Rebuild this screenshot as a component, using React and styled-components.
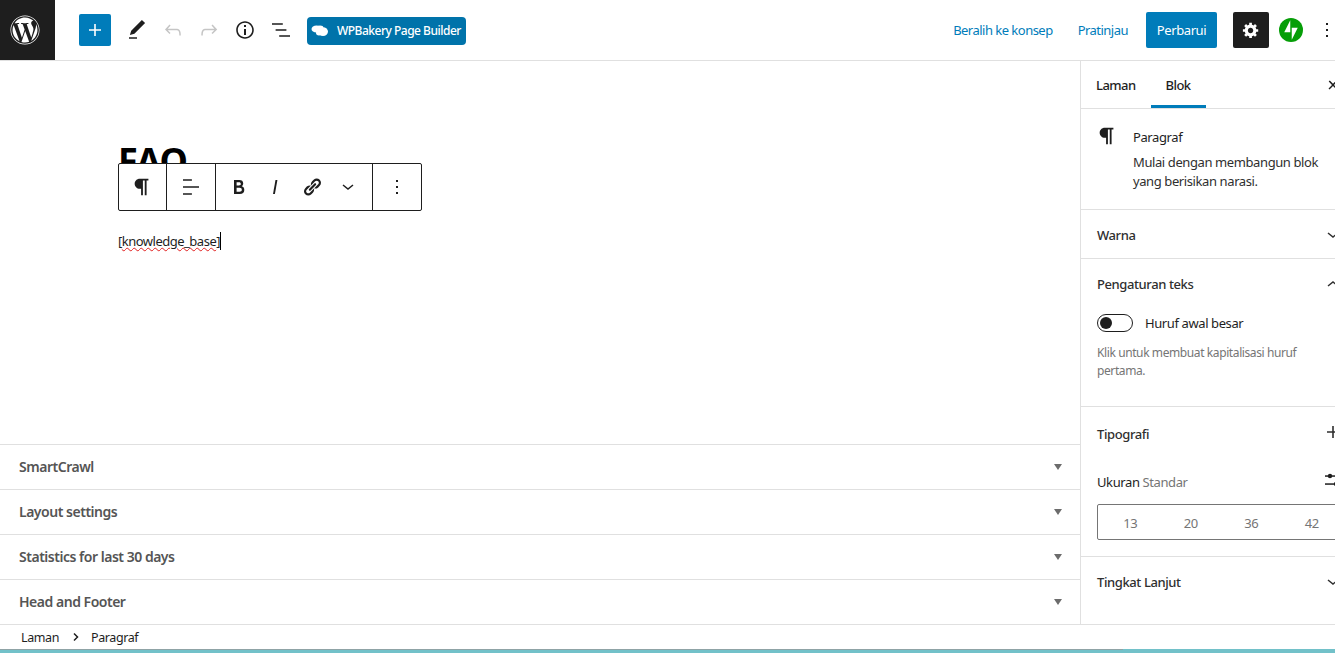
import React from 'react';
import styled, { createGlobalStyle } from 'styled-components';
import { FaWordpress } from 'react-icons/fa';

const GlobalStyle = createGlobalStyle`
  html, body {
    margin: 0;
    height: 100%;
    overflow: hidden;
    background: #fff;
  }
  * {
    box-sizing: border-box;
  }
`;

const Shell = styled.div`
  width: 1361px;
  height: 653px;
  display: flex;
  flex-direction: column;
  font-family: 'Noto Sans', 'Open Sans', sans-serif;
  font-size: 13px;
  letter-spacing: -0.4px;
  color: #1e1e1e;
`;

const Header = styled.header`
  height: 61px;
  flex: none;
  display: flex;
  align-items: center;
  border-bottom: 1px solid #e0e0e0;
  padding-right: 16px;
`;

const LogoBox = styled.div`
  width: 55px;
  height: 60px;
  background: #1e1e1e;
  color: #fff;
  display: flex;
  align-items: center;
  justify-content: center;
  padding-right: 5px;
  margin-right: 24px;
`;

const AddButton = styled.div`
  width: 32px;
  height: 32px;
  background: #007cba;
  border-radius: 2px;
  color: #fff;
  display: flex;
  align-items: center;
  justify-content: center;
  margin-right: 8px;
`;

const ToolIcon = styled.div`
  width: 36px;
  height: 36px;
  margin-left: ${({ $offset }) => $offset || 0}px;
  display: flex;
  align-items: center;
  justify-content: center;
  color: ${({ $muted }) => ($muted ? '#c5c5c5' : '#1e1e1e')};
`;

const BakeryButton = styled.div`
  width: 159px;
  height: 28px;
  margin-left: 8px;
  margin-top: 1px;
  padding-left: 4px;
  background: #0073aa;
  border-radius: 4px;
  color: #fff;
  font-size: 12px;
  font-weight: 500;
  letter-spacing: -0.5px;
  display: flex;
  align-items: center;
  gap: 8px;
  white-space: nowrap;
`;

const HeaderRight = styled.div`
  margin-left: auto;
  display: flex;
  align-items: center;
`;

const TextLink = styled.a`
  color: #007cba;
  letter-spacing: -0.52px;
  margin-right: ${({ $gap }) => $gap}px;
  white-space: nowrap;
`;

const PublishButton = styled.div`
  width: 71px;
  height: 36px;
  background: #007cba;
  color: #fff;
  border-radius: 2px;
  display: flex;
  align-items: center;
  justify-content: center;
  margin-right: 16px;
`;

const SettingsButton = styled.div`
  width: 36px;
  height: 36px;
  background: #1e1e1e;
  color: #fff;
  border-radius: 2px;
  display: flex;
  align-items: center;
  justify-content: center;
  margin-right: 10px;
`;

const Workspace = styled.div`
  flex: 1;
  min-height: 0;
  display: flex;
`;

const Content = styled.main`
  width: 1080px;
  flex: none;
  display: flex;
  flex-direction: column;
`;

const Editor = styled.div`
  flex: 1;
  position: relative;
  padding: 80px 0 0 118px;
`;

const Title = styled.h1`
  margin: 0;
  font-size: 36px;
  line-height: 40px;
  font-weight: 700;
  color: #000;
  letter-spacing: -0.9px;
`;

const BlockToolbar = styled.div`
  position: absolute;
  left: 118px;
  top: 102px;
  height: 48px;
  display: flex;
  background: #fff;
  border: 1px solid #1e1e1e;
  border-radius: 2px;
`;

const ToolbarGroup = styled.div`
  display: flex;
  align-items: center;
  justify-content: center;
  width: ${({ $width }) => $width}px;
  padding-right: ${({ $shift }) => $shift || 0}px;
  border-right: 1px solid #1e1e1e;

  &:last-child {
    border-right: 0;
  }
`;

const FormatGroup = styled(ToolbarGroup)`
  justify-content: flex-start;
  padding-left: 4.5px;
`;

const FormatButton = styled.div`
  width: 36.5px;
  display: flex;
  justify-content: center;
`;

const Paragraph = styled.p`
  margin: 50px 0 0;
  font-size: 13px;
  line-height: 20px;
  letter-spacing: -0.5px;
  color: #1e1e1e;
  display: flex;
`;

const Misspelled = styled.span`
  text-decoration: underline wavy #e02020 1px;
`;

const Caret = styled.span`
  width: 1px;
  height: 18px;
  margin-top: 1px;
  background: #000;
`;

const Metaboxes = styled.div`
  flex: none;
`;

const Metabox = styled.div`
  height: 45px;
  border-top: 1px solid #e0e0e0;
  padding: 0 18px 2px 19px;
  display: flex;
  align-items: center;
  justify-content: space-between;
  font-size: 14px;
  font-weight: 600;
  color: #555;
  letter-spacing: -0.48px;
`;

const Triangle = styled.span`
  width: 0;
  height: 0;
  margin-top: 2px;
  border-left: 4px solid transparent;
  border-right: 4px solid transparent;
  border-top: 6px solid #6c6c6c;
`;

const Sidebar = styled.aside`
  width: 281px;
  flex: none;
  border-left: 1px solid #e0e0e0;
  display: flex;
  flex-direction: column;
`;

const Tabs = styled.div`
  height: 48px;
  flex: none;
  display: flex;
  align-items: stretch;
  border-bottom: 1px solid #e0e0e0;
  padding-right: 16px;
`;

const Tab = styled.div`
  padding: 0 15px;
  display: flex;
  align-items: center;
  font-weight: 500;
  letter-spacing: -0.55px;
  box-shadow: ${({ $active }) => ($active ? 'inset 0 -3px 0 #007cba' : 'none')};
`;

const CloseIcon = styled.div`
  margin-left: auto;
  width: 24px;
  display: flex;
  align-items: center;
  justify-content: center;
`;

const BlockCard = styled.div`
  height: 101px;
  flex: none;
  display: flex;
  padding: 16px 16px 0 16px;
  border-bottom: 1px solid #e0e0e0;
`;

const CardIcon = styled.div`
  width: 24px;
  height: 24px;
  margin-right: 13px;
  margin-left: -1px;
`;

const CardTitle = styled.div`
  line-height: 24px;
  margin-bottom: 4px;
`;

const CardText = styled.div`
  width: 190px;
  line-height: 19px;
  color: #2f2f2f;
`;

const Panel = styled.section`
  flex: none;
  height: ${({ $height }) => $height}px;
  padding: 0 16px;
  border-bottom: ${({ $last }) => ($last ? '0' : '1px solid #e0e0e0')};
`;

const PanelHead = styled.div`
  height: ${({ $height }) => $height || 49}px;
  padding-top: 1px;
  display: flex;
  align-items: center;
  justify-content: space-between;
  font-weight: 500;
  color: #2f2f2f;
`;

const RaisedIcon = styled.div`
  display: flex;
  margin-top: -5px;
`;

const ToggleRow = styled.div`
  margin-top: 6px;
  display: flex;
  align-items: center;
  gap: 12px;
`;

const ToggleTrack = styled.div`
  width: 36px;
  height: 18px;
  border: 1px solid #1e1e1e;
  border-radius: 9px;
  padding: 2px;
`;

const ToggleKnob = styled.div`
  width: 12px;
  height: 12px;
  border-radius: 50%;
  background: #1e1e1e;
`;

const HelpText = styled.p`
  margin: 12px 0 0;
  width: 240px;
  font-size: 12px;
  line-height: 18px;
  color: #757575;
`;

const SizeRow = styled.div`
  margin-top: 10px;
  display: flex;
  align-items: center;
  justify-content: space-between;
`;

const Muted = styled.span`
  color: #757575;
`;

const SizeDial = styled.div`
  margin-top: 10px;
  height: 36px;
  border: 1px solid #757575;
  border-radius: 2px;
  padding: 1px 2px 0;
  display: grid;
  grid-template-columns: repeat(4, 1fr);
`;

const SizeOption = styled.div`
  display: flex;
  align-items: center;
  justify-content: center;
  color: #757575;
`;

const Breadcrumbs = styled.div`
  height: 25px;
  flex: none;
  border-top: 1px solid #e0e0e0;
  padding-left: 21px;
  display: flex;
  align-items: center;
  font-size: 12.5px;
`;

const CrumbChevron = styled.div`
  width: 8px;
  margin: 0 11px 0 13px;
  display: flex;
`;

const BottomBar = styled.div`
  height: 4px;
  flex: none;
  background: #72c1c9;
  position: relative;

  &::before {
    content: '';
    position: absolute;
    left: 0;
    top: 0;
    width: 1123px;
    height: 1px;
    background: #8fa3a6;
  }
`;

const WpIcon = ({ d, size = 24, box = 24 }) => (
  <svg width={size} height={size} viewBox={`0 0 ${box} ${box}`} fill='currentColor'>
    <path d={d} />
  </svg>
);

const Chevron = ({ up, size = 24, width = 1.5 }) => (
  <svg width={size} height={size} viewBox='0 0 24 24' fill='none' stroke='currentColor' strokeWidth={width}>
    <polyline points={up ? '7 14 12 10 17 14' : '7 10 12 14 17 10'} />
  </svg>
);

const icons = {
  plus: 'M18 11.2h-5.2V6h-1.6v5.2H6v1.6h5.2V18h1.6v-5.2H18z',
  pencil: 'M20.1 5.1L16.9 2 6.2 12.7l-1.3 4.4 4.5-1.3L20.1 5.1zM4 20.8h8v-1.5H4v1.5z',
  undo: 'M18.3 11.7c-.6-.6-1.4-.9-2.3-.9H6.7l2.9-3.3-1.1-1-4.5 5L8.5 16l1-1-2.7-2.7H16c.5 0 .9.2 1.3.5 1 1 1 3.4 1 4.5v.3h1.5v-.2c0-1.5 0-4.3-1.5-5.7z',
  redo: 'M15.6 6.5l-1.1 1 2.9 3.3H8c-.9 0-1.7.3-2.3.9-1.4 1.5-1.4 4.2-1.4 5.6v.2h1.5v-.3c0-1.1 0-3.5 1-4.5.3-.3.7-.5 1.3-.5h9.2L14.5 15l1.1 1.1 4.6-4.6-4.6-5z',
  info: 'M12 3.2c-4.8 0-8.8 3.9-8.8 8.8 0 4.8 3.9 8.8 8.8 8.8 4.8 0 8.8-3.9 8.8-8.8 0-4.8-4-8.8-8.8-8.8zm0 16c-4 0-7.2-3.3-7.2-7.2C4.8 8 8 4.8 12 4.8s7.2 3.3 7.2 7.2c0 4-3.2 7.2-7.2 7.2zM11 17h2v-6h-2v6zm0-8h2V7h-2v2z',
  list: 'M13.8 5.2H3v1.5h10.8V5.2zm-3.6 12v1.5H21v-1.5H10.2zm7.2-6H6.6v1.5h10.8v-1.5z',
  paragraph: 'M9.5 3C6.5 3 4 5.5 4 8.5S6.5 14 9.5 14H11v7h2V5h2v16h2V5h2V3z',
  align: 'M4 19.8h8.9v-1.5H4v1.5zm8.9-15.6H4v1.5h8.9V4.2zm-8.9 7v1.5h16v-1.5H4z',
  bold: 'M14.7 11.3c1-.6 1.5-1.6 1.5-3 0-2.3-1.3-3.4-4-3.4H7v14h5.8c1.4 0 2.5-.3 3.3-1 .8-.7 1.2-1.7 1.2-2.9.1-1.9-.8-3.1-2.6-3.7zm-5.1-4h2.3c.6 0 1.1.1 1.4.4.3.3.5.7.5 1.2s-.2 1-.5 1.2c-.3.3-.8.4-1.4.4H9.6V7.3zm4.6 9c-.4.3-1 .4-1.7.4H9.6v-3.9h2.9c.7 0 1.3.2 1.7.5.4.3.6.8.6 1.5s-.2 1.2-.6 1.5z',
  italic: 'M12.5 5L10 19h1.9l2.5-14z',
  link: 'M17.74 2.76c1.68 1.69 1.68 4.41 0 6.1l-1.53 1.52c-1.12 1.12-2.7 1.47-4.14 1.09l2.62-2.61.76-.77.76-.76c.84-.84.84-2.2 0-3.04-.84-.85-2.2-.85-3.04 0l-.77.76-3.38 3.38c-.37-1.44-.02-3.02 1.1-4.14l1.52-1.53c1.69-1.68 4.42-1.68 6.1 0zM8.59 13.43l5.34-5.34c.42-.42.42-1.1 0-1.52-.44-.43-1.13-.39-1.53 0l-5.33 5.34c-.42.42-.42 1.1 0 1.52.44.43 1.13.39 1.52 0zm-.76 2.29l4.14-4.15c.38 1.44.03 3.02-1.09 4.14l-1.52 1.53c-1.69 1.68-4.41 1.68-6.1 0-1.68-1.68-1.68-4.42 0-6.1l1.53-1.52c1.12-1.12 2.7-1.47 4.14-1.1l-4.14 4.15c-.85.84-.85 2.2 0 3.05.84.84 2.2.84 3.04 0z',
  more: 'M13 19h-2v-2h2v2zm0-6h-2v-2h2v2zm0-6h-2V5h2v2z',
  cog: 'M18 12h-2.18c-.17.7-.44 1.35-.81 1.93l1.54 1.54-2.1 2.1-1.54-1.54c-.58.36-1.23.63-1.91.79V19H8v-2.18c-.68-.16-1.33-.43-1.91-.79l-1.54 1.54-2.12-2.12 1.54-1.54c-.36-.58-.63-1.23-.79-1.91H1V9.03h2.17c.16-.7.44-1.35.8-1.94L2.43 5.55l2.1-2.1 1.54 1.54c.58-.37 1.24-.64 1.93-.81V2h3v2.18c.68.16 1.33.43 1.91.79l1.54-1.54 2.12 2.12-1.54 1.54c.36.59.64 1.24.8 1.94H18V12zm-8.5 1.5c1.66 0 3-1.34 3-3s-1.34-3-3-3-3 1.34-3 3 1.34 3 3 3z',
  close: 'M13 11.9l3.3-3.4-1.1-1-3.2 3.3-3.2-3.3-1.1 1 3.3 3.4-3.5 3.6 1 1L12 13l3.5 3.5 1-1z',
};

const CloudLogo = () => (
  <svg width='18' height='14' viewBox='0 0 18 14' fill='#fff'>
    <ellipse cx='5.5' cy='5' rx='5' ry='3.6' />
    <ellipse cx='9' cy='3.6' rx='3.4' ry='2' />
    <ellipse cx='12' cy='7.6' rx='5' ry='4.4' />
    <ellipse cx='8' cy='9' rx='3' ry='2.4' />
  </svg>
);

const JetpackLogo = () => (
  <svg width='24' height='24' viewBox='0 0 32 32'>
    <circle cx='16' cy='16' r='16' fill='#069e08' />
    <polygon points='15,19 7,19 15,3' fill='#fff' />
    <polygon points='17,29 17,13 25,13' fill='#fff' />
  </svg>
);

const SlidersIcon = () => (
  <svg width='24' height='24' viewBox='0 0 24 24' fill='#1e1e1e'>
    <rect x='4' y='5.3' width='16' height='1.5' />
    <circle cx='9' cy='6' r='2.2' />
    <rect x='4' y='13.3' width='16' height='1.5' />
    <circle cx='15' cy='14' r='2.2' />
  </svg>
);

const metaboxes = ['SmartCrawl', 'Layout settings', 'Statistics for last 30 days', 'Head and Footer'];
const fontSizes = [13, 20, 36, 42];

function App() {
  return (
    <Shell>
      <GlobalStyle />
      <Header>
        <LogoBox>
          <FaWordpress size={30} />
        </LogoBox>
        <AddButton>
          <WpIcon d={icons.plus} />
        </AddButton>
        <ToolIcon>
          <WpIcon d={icons.pencil} />
        </ToolIcon>
        <ToolIcon $muted>
          <WpIcon d={icons.undo} />
        </ToolIcon>
        <ToolIcon $muted>
          <WpIcon d={icons.redo} />
        </ToolIcon>
        <ToolIcon>
          <WpIcon d={icons.info} />
        </ToolIcon>
        <ToolIcon>
          <WpIcon d={icons.list} />
        </ToolIcon>
        <BakeryButton>
          <CloudLogo />
          WPBakery Page Builder
        </BakeryButton>
        <HeaderRight>
          <TextLink $gap={25}>Beralih ke konsep</TextLink>
          <TextLink $gap={18}>Pratinjau</TextLink>
          <PublishButton>Perbarui</PublishButton>
          <SettingsButton>
            <WpIcon d={icons.cog} size={18} box={20} />
          </SettingsButton>
          <JetpackLogo />
          <ToolIcon $offset={6}>
            <WpIcon d={icons.more} />
          </ToolIcon>
        </HeaderRight>
      </Header>

      <Workspace>
        <Content>
          <Editor>
            <Title>FAQ</Title>
            <BlockToolbar>
              <ToolbarGroup $width={48} $shift={2}>
                <WpIcon d={icons.paragraph} size={22} />
              </ToolbarGroup>
              <ToolbarGroup $width={49}>
                <WpIcon d={icons.align} />
              </ToolbarGroup>
              <FormatGroup $width={157}>
                <FormatButton>
                  <WpIcon d={icons.bold} />
                </FormatButton>
                <FormatButton>
                  <WpIcon d={icons.italic} />
                </FormatButton>
                <FormatButton>
                  <WpIcon d={icons.link} size={20} box={20} />
                </FormatButton>
                <FormatButton>
                  <Chevron />
                </FormatButton>
              </FormatGroup>
              <ToolbarGroup $width={48}>
                <WpIcon d={icons.more} />
              </ToolbarGroup>
            </BlockToolbar>
            <Paragraph>
              [<Misspelled>knowledge_base</Misspelled>]<Caret />
            </Paragraph>
          </Editor>
          <Metaboxes>
            {metaboxes.map((name) => (
              <Metabox key={name}>
                {name}
                <Triangle />
              </Metabox>
            ))}
          </Metaboxes>
        </Content>

        <Sidebar>
          <Tabs>
            <Tab>Laman</Tab>
            <Tab $active>Blok</Tab>
            <CloseIcon>
              <WpIcon d={icons.close} />
            </CloseIcon>
          </Tabs>
          <BlockCard>
            <CardIcon>
              <WpIcon d={icons.paragraph} size={22} />
            </CardIcon>
            <div>
              <CardTitle>Paragraf</CardTitle>
              <CardText>Mulai dengan membangun blok yang berisikan narasi.</CardText>
            </div>
          </BlockCard>
          <Panel $height={49}>
            <PanelHead>
              Warna
              <Chevron />
            </PanelHead>
          </Panel>
          <Panel $height={148}>
            <PanelHead>
              Pengaturan teks
              <Chevron up />
            </PanelHead>
            <ToggleRow>
              <ToggleTrack>
                <ToggleKnob />
              </ToggleTrack>
              Huruf awal besar
            </ToggleRow>
            <HelpText>Klik untuk membuat kapitalisasi huruf pertama.</HelpText>
          </Panel>
          <Panel $height={150}>
            <PanelHead $height={53}>
              Tipografi
              <RaisedIcon>
                <WpIcon d={icons.plus} />
              </RaisedIcon>
            </PanelHead>
            <SizeRow>
              <span>
                Ukuran <Muted>Standar</Muted>
              </span>
              <SlidersIcon />
            </SizeRow>
            <SizeDial>
              {fontSizes.map((size) => (
                <SizeOption key={size}>{size}</SizeOption>
              ))}
            </SizeDial>
          </Panel>
          <Panel $last>
            <PanelHead>
              Tingkat Lanjut
              <Chevron />
            </PanelHead>
          </Panel>
        </Sidebar>
      </Workspace>

      <Breadcrumbs>
        Laman
        <CrumbChevron>
          <svg width='8' height='10' viewBox='0 0 8 10' fill='none' stroke='#1e1e1e' strokeWidth='1.5'>
            <polyline points='2 1.5 5.5 5 2 8.5' />
          </svg>
        </CrumbChevron>
        Paragraf
      </Breadcrumbs>
      <BottomBar />
    </Shell>
  );
}

export default App;
